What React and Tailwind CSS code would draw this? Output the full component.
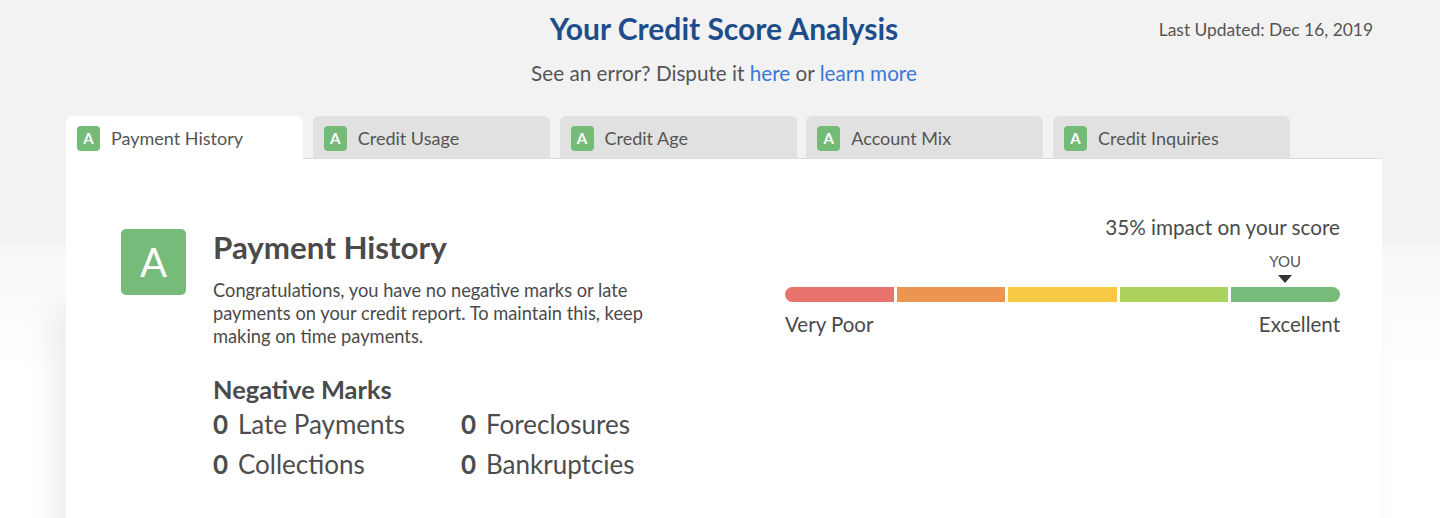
import React from 'react'

const tabs = ['Payment History', 'Credit Usage', 'Credit Age', 'Account Mix', 'Credit Inquiries']

const segments = ['bg-[#e9746e]', 'bg-[#eb9551]', 'bg-[#f7c945]', 'bg-[#abd35e]', 'bg-[#77bb7a]']

function Grade({ big }) {
  if (big) {
    return (
      <div className="w-[65px] h-[66px] flex-shrink-0 rounded-[5px] bg-[#76bb7a] text-white text-[40px] leading-none flex items-center justify-center">
        A
      </div>
    )
  }
  return (
    <span className="w-[23px] h-[25px] rounded-[4px] bg-[#74bb78] text-white text-[15px] font-bold flex items-center justify-center">
      A
    </span>
  )
}

function Mark({ count, label }) {
  return (
    <div className="flex items-center h-[40px] text-[26px]">
      <span className="w-[25px] font-bold">{count}</span>
      <span>{label}</span>
    </div>
  )
}

export default function App() {
  return (
    <div className="min-h-screen bg-[linear-gradient(#f2f2f2_0px,#f2f2f2_240px,#f8f8f8_250px,#ffffff_370px)] font-['Lato',sans-serif] text-[#4d4d4d] overflow-hidden">
      <div className="ml-[66px] w-[1316px]">
        {/* Header */}
        <div className="relative h-[116px] flex flex-col items-center">
          <h1 className="mt-[10px] text-[30px] leading-[36px] font-bold text-[#1e4d8c]">Your Credit Score Analysis</h1>
          <p className="mt-[14px] text-[20.7px] leading-[26px] text-[#555]">
            See an error? Dispute it <span className="text-[#3a78d6]">here</span> or{' '}
            <span className="text-[#3a78d6]">learn more</span>
          </p>
          <div className="absolute right-[9px] top-[18px] text-[17.4px] leading-[24px] text-[#555]">Last Updated: Dec 16, 2019</div>
        </div>

        {/* Tabs */}
        <div className="flex gap-[9.75px] h-[42px]">
          {tabs.map((t, i) => (
            <div
              key={t}
              className={`w-[237px] rounded-t-[6px] flex items-center gap-[11px] pl-[11px] pt-[2px] text-[18px] ${
                i === 0 ? 'bg-white relative z-10 h-[43px]' : 'bg-[#e1e1e1]'
              }`}
            >
              <Grade />
              <span className="text-[#555]">{t}</span>
            </div>
          ))}
        </div>

        {/* Card */}
        <div className="bg-white border-t border-[#dcdcdc] h-[400px] shadow-[-14px_150px_30px_rgba(0,0,0,0.07)] flex justify-between pl-[55px] pr-[42px]">
          <div className="flex gap-[27px] pt-[70px]">
            <Grade big />
            <div>
              <h2 className="text-[31.3px] leading-[36px] font-bold text-[#4a4a4a]">Payment History</h2>
              <p className="mt-[14px] w-[440px] text-[18.3px] leading-[23px] text-[#4a4a4a]">
                Congratulations, you have no negative marks or late payments on your credit report. To maintain this, keep making on time payments.
              </p>
              <h3 className="mt-[26px] text-[25.4px] leading-[30px] font-bold text-[#4a4a4a]">Negative Marks</h3>
              <div className="grid grid-cols-[248px_auto]">
                <Mark count="0" label="Late Payments" />
                <Mark count="0" label="Foreclosures" />
                <Mark count="0" label="Collections" />
                <Mark count="0" label="Bankruptcies" />
              </div>
            </div>
          </div>

          <div className="w-[555px] pt-[56px] flex flex-col">
            <div className="text-right text-[20.7px] leading-[24px] text-[#4a4a4a]">35% impact on your score</div>
            <div className="flex justify-end mr-[39px] mt-[14px]">
              <div className="flex flex-col items-center">
                <span className="text-[15px] leading-[17px] text-[#555]">YOU</span>
                <span className="mt-[5px] w-0 h-0 border-l-[7px] border-r-[7px] border-t-[8px] border-l-transparent border-r-transparent border-t-[#333]" />
              </div>
            </div>
            <div className="mt-[4px] h-[15px] rounded-full overflow-hidden flex gap-[3px]">
              {segments.map((c) => (
                <div key={c} className={`flex-1 ${c}`} />
              ))}
            </div>
            <div className="mt-[10px] flex justify-between text-[20.5px] leading-[24px] text-[#4a4a4a]">
              <span>Very Poor</span>
              <span>Excellent</span>
            </div>
          </div>
        </div>
      </div>
    </div>
  )
}
